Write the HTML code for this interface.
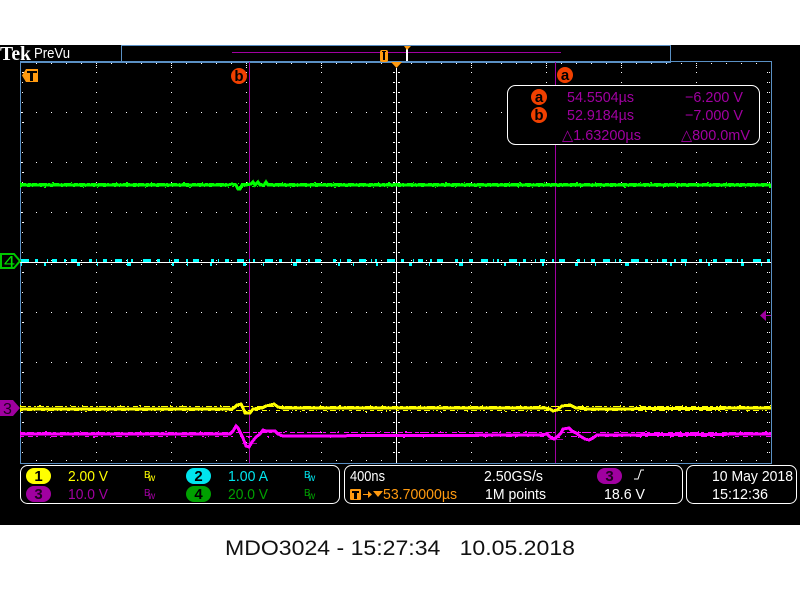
<!DOCTYPE html>
<html>
<head>
<meta charset="utf-8">
<title>MDO3024</title>
<style>
html,body{margin:0;padding:0;background:#fff;width:800px;height:600px;overflow:hidden}
svg{display:block;position:absolute;left:0;top:0}
text{font-family:"Liberation Sans","DejaVu Sans",sans-serif;font-size:15px}
.g line{stroke:#fff;stroke-width:1;shape-rendering:crispEdges}
.c{shape-rendering:crispEdges}
.n{fill:none;shape-rendering:crispEdges}
.b{font-size:10px}
</style>
</head>
<body>
<svg width="800" height="600" viewBox="0 0 800 600" xmlns="http://www.w3.org/2000/svg">
<rect x="0" y="0" width="800" height="600" fill="#fff"/>
<rect x="0" y="45" width="800" height="480" fill="#000"/>

<!-- Graticule -->
<g class="g">
  <line x1="36" y1="63.5" x2="771" y2="63.5" stroke-dasharray="1 14"/>
  <line x1="21" y1="112.5" x2="771" y2="112.5" stroke-dasharray="1 14"/>
  <line x1="21" y1="162.5" x2="771" y2="162.5" stroke-dasharray="1 14"/>
  <line x1="21" y1="212.5" x2="771" y2="212.5" stroke-dasharray="1 14"/>
  <line x1="21" y1="312.5" x2="771" y2="312.5" stroke-dasharray="1 14"/>
  <line x1="21" y1="362.5" x2="771" y2="362.5" stroke-dasharray="1 14"/>
  <line x1="21" y1="412.5" x2="771" y2="412.5" stroke-dasharray="1 14"/>
  <line x1="21" y1="260.5" x2="771" y2="260.5" stroke-dasharray="1 14"/>
  <line x1="21" y1="264.5" x2="771" y2="264.5" stroke-dasharray="1 14"/>
  <line x1="36" y1="460.5" x2="771" y2="460.5" stroke-dasharray="1 14"/>

  <line x1="96.5" y1="72" x2="96.5" y2="462" stroke-dasharray="1 9"/>
  <line x1="171.5" y1="72" x2="171.5" y2="462" stroke-dasharray="1 9"/>
  <line x1="246.5" y1="72" x2="246.5" y2="462" stroke-dasharray="1 9"/>
  <line x1="321.5" y1="72" x2="321.5" y2="462" stroke-dasharray="1 9"/>
  <line x1="471.5" y1="72" x2="471.5" y2="462" stroke-dasharray="1 9"/>
  <line x1="546.5" y1="72" x2="546.5" y2="462" stroke-dasharray="1 9"/>
  <line x1="621.5" y1="72" x2="621.5" y2="462" stroke-dasharray="1 9"/>
  <line x1="696.5" y1="72" x2="696.5" y2="462" stroke-dasharray="1 9"/>
  <line x1="96.5" y1="63" x2="96.5" y2="69" stroke-dasharray="1 1"/>
  <line x1="171.5" y1="63" x2="171.5" y2="69" stroke-dasharray="1 1"/>
  <line x1="246.5" y1="63" x2="246.5" y2="69" stroke-dasharray="1 1"/>
  <line x1="321.5" y1="63" x2="321.5" y2="69" stroke-dasharray="1 1"/>
  <line x1="471.5" y1="63" x2="471.5" y2="69" stroke-dasharray="1 1"/>
  <line x1="546.5" y1="63" x2="546.5" y2="69" stroke-dasharray="1 1"/>
  <line x1="621.5" y1="63" x2="621.5" y2="69" stroke-dasharray="1 1"/>
  <line x1="696.5" y1="63" x2="696.5" y2="69" stroke-dasharray="1 1"/>

  <line x1="22.5" y1="72" x2="22.5" y2="462" stroke-dasharray="1 9"/>
  <line x1="23.5" y1="72" x2="23.5" y2="462" stroke-dasharray="1 49"/>
  <line x1="769.5" y1="72" x2="769.5" y2="462" stroke-dasharray="1 9"/>
  <line x1="767.5" y1="72" x2="767.5" y2="462" stroke-dasharray="1 9"/>
  <line x1="393.5" y1="72" x2="393.5" y2="462" stroke-dasharray="1 9"/>
  <line x1="399.5" y1="72" x2="399.5" y2="462" stroke-dasharray="1 9"/>
  <line x1="394.5" y1="72" x2="394.5" y2="462" stroke-dasharray="1 9"/>
  <line x1="398.5" y1="72" x2="398.5" y2="462" stroke-dasharray="1 9"/>
</g>

<!-- Frame -->
<g class="c" fill="#5a90c4">
  <rect x="20" y="61" width="651" height="2"/>
  <rect x="671" y="61" width="101" height="1"/>
  <rect x="20" y="61" width="1" height="403"/>
  <rect x="771" y="61" width="1" height="403"/>
  <rect x="20" y="463" width="752" height="1"/>
  <rect x="121" y="45" width="550" height="1"/>
  <rect x="121" y="45" width="1" height="17"/>
  <rect x="670" y="45" width="1" height="17"/>
</g>

<!-- Preview -->
<rect class="c" x="232" y="52" width="329" height="1" fill="#a000a0"/>
<rect x="380" y="50" width="8" height="12" rx="2" fill="#ff9a10"/>
<rect class="c" x="383" y="52" width="2" height="8" fill="#000"/>
<rect class="c" x="382" y="51" width="4" height="1" fill="#000"/>
<rect class="c" x="406" y="47" width="2" height="14" fill="#fff"/>
<polygon points="404,46 411,46 407,50" fill="#ff9a10"/>

<!-- Logo -->
<text x="0" y="60" textLength="31" lengthAdjust="spacingAndGlyphs" fill="#fff" style="font-family:'Liberation Serif',serif;font-size:20px;font-weight:bold">Tek</text>
<text x="34" y="58" textLength="36" lengthAdjust="spacingAndGlyphs" fill="#fff">PreVu</text>

<!-- Cursors and centre line -->
<rect class="c" x="396" y="68" width="1" height="395" fill="#fff"/>
<rect class="c" x="249" y="62" width="1" height="401" fill="#a000a0"/>
<rect class="c" x="555" y="62" width="1" height="401" fill="#a000a0"/>
<polygon points="391,62 402,62 396.5,68" fill="#ff9a10"/>
<rect class="c" x="242" y="443" width="15" height="1" fill="#a000a0"/>
<rect class="c" x="548" y="439" width="15" height="1" fill="#a000a0"/>

<!-- T marker -->
<polygon points="22,75.5 26,69 38,69 38,82 26,82" fill="#ff9a10"/>
<rect class="c" x="27" y="71" width="10" height="2" fill="#000"/>
<rect class="c" x="30" y="71" width="3" height="10" fill="#000"/>

<!-- Green trace -->
<polyline class="n" stroke="#00ff00" stroke-width="3" points="20,185 228,185 232,184 236,185 238,189 240,189 242,185 246,185 251,184 253,182 255,185 258,182 260,185 264,185 266,182 268,185 771,185"/>
<line class="n" stroke="#00ff00" stroke-width="1" x1="20" y1="183.5" x2="771" y2="183.5" stroke-dasharray="6 2 3 1 5 2 8 1 2 3 6 2 1 2 7 3 4 1"/>
<line class="n" stroke="#00ff00" stroke-width="1" x1="20" y1="186.5" x2="771" y2="186.5" stroke-dasharray="2 5 3 2 1 7 2 3 1 4 3 8 2 3 1 6"/>
<line class="n" stroke="#00ff00" stroke-width="1" x1="20" y1="182.5" x2="771" y2="182.5" stroke-dasharray="1 31 2 17 1 44 1 9 2 23"/>
<line class="n" stroke="#00ff00" stroke-width="1" x1="20" y1="187.5" x2="771" y2="187.5" stroke-dasharray="1 23 2 37 1 13 1 47 1 19"/>

<!-- Cyan trace -->
<line class="n" stroke="#00ffff" stroke-width="3" x1="21" y1="260.5" x2="771" y2="260.5" stroke-dasharray="8 6 3 9 1 4 5 7 2 5 6 12 3 4 1 6 4 8 7 5 1 3 2 10"/>
<line class="n" stroke="#00ffff" stroke-width="3" x1="21" y1="264.5" x2="771" y2="264.5" stroke-dasharray="1 22 2 31 3 17 1 29 4 41 2 13"/>
<rect class="c" x="20" y="262" width="751" height="1" fill="#fff"/>

<!-- Yellow trace -->
<polyline class="n" stroke="#ffff00" stroke-width="3" points="20,409 232,409 235,407 237,405 241,404 243,408 245,413 250,413 253,409 262,408 266,406 270,405 274,404 278,407 283,408 545,408 550,409 553,411 557,410 562,406 570,405 576,408 590,409 771,408"/>
<line class="n" stroke="#ffff00" stroke-width="1" x1="20" y1="406.5" x2="771" y2="406.5" stroke-dasharray="6 2 3 3 2 1 7 2 3 3 1 2 8 2 2 4 5 2 1 3"/>
<line class="n" stroke="#ffff00" stroke-width="1" x1="20" y1="410.5" x2="771" y2="410.5" stroke-dasharray="3 4 5 2 1 6 4 3 6 3 1 2 2 5"/>
<line class="n" stroke="#ffff00" stroke-width="1" x1="20" y1="405.5" x2="771" y2="405.5" stroke-dasharray="1 18 2 29 1 11 1 37"/>
<line class="n" stroke="#ffff00" stroke-width="1" x1="20" y1="411.5" x2="771" y2="411.5" stroke-dasharray="1 26 1 37 2 19 1 53"/>

<!-- Magenta trace -->
<polyline class="n" stroke="#ff00ff" stroke-width="3" points="20,434 225,434 230,434 233,431 236,426 238,428 240,432 243,438 246,446 249,447 252,442 256,437 260,434 263,430 266,431 275,431 278,434 283,436 540,435 547,434 550,437 554,439 558,436 561,433 563,429 569,428 572,431 576,433 580,436 585,439 589,440 593,438 597,435 771,434"/>
<line class="n" stroke="#ff00ff" stroke-width="1" x1="20" y1="432.5" x2="771" y2="432.5" stroke-dasharray="5 2 7 3 4 1 9 2 3 4 6 1 2 5"/>
<line class="n" stroke="#ff00ff" stroke-width="1" x1="20" y1="436.5" x2="771" y2="436.5" stroke-dasharray="4 4 5 3 2 7 1 5 6 3 3 9 2 4 1 6"/>
<line class="n" stroke="#ff00ff" stroke-width="1" x1="20" y1="431.5" x2="771" y2="431.5" stroke-dasharray="1 24 2 33 1 17 1 41"/>
<line class="n" stroke="#ff00ff" stroke-width="1" x1="20" y1="437.5" x2="771" y2="437.5" stroke-dasharray="1 29 1 42 2 18 1 61"/>

<!-- Channel markers -->
<polygon points="1,254 14,254 20,261 14,268 1,268" fill="#000" stroke="#00c800" stroke-width="2"/>
<text x="4" y="267" textLength="11" lengthAdjust="spacingAndGlyphs" fill="#00e000" style="font-size:16px">4</text>
<polygon points="0,400 13,400 20,408 13,416 0,416" fill="#a000a0"/>
<text x="3" y="414" fill="#200020" style="font-size:16px">3</text>
<polygon points="760,315.5 766,310 766,321" fill="#a000a0"/>
<rect class="c" x="766" y="315" width="5" height="1" fill="#a000a0"/>

<!-- Cursor labels -->
<circle cx="239" cy="76" r="8" fill="#f04000"/>
<text x="239" y="81" text-anchor="middle" fill="#000" style="font-weight:bold">b</text>
<circle cx="565" cy="75" r="8" fill="#f04000"/>
<text x="565" y="80" text-anchor="middle" fill="#000" style="font-weight:bold">a</text>

<!-- Readout -->
<rect x="507.5" y="85.5" width="252" height="59" rx="8" fill="#000" stroke="#fff" stroke-width="1"/>
<circle cx="539" cy="97" r="8" fill="#f04000"/>
<text x="539" y="102" text-anchor="middle" fill="#000" style="font-weight:bold">a</text>
<circle cx="539" cy="115" r="8" fill="#f04000"/>
<text x="539" y="120" text-anchor="middle" fill="#000" style="font-weight:bold">b</text>
<g fill="#a000a0">
  <text x="567" y="102" textLength="67" lengthAdjust="spacingAndGlyphs">54.5504µs</text>
  <text x="567" y="120" textLength="67" lengthAdjust="spacingAndGlyphs">52.9184µs</text>
  <text x="562" y="140" textLength="79" lengthAdjust="spacingAndGlyphs">△1.63200µs</text>
  <text x="685" y="102" textLength="58" lengthAdjust="spacingAndGlyphs">−6.200 V</text>
  <text x="685" y="120" textLength="58" lengthAdjust="spacingAndGlyphs">−7.000 V</text>
  <text x="681" y="140" textLength="69" lengthAdjust="spacingAndGlyphs">△800.0mV</text>
</g>

<!-- Bottom boxes -->
<g fill="none" stroke="#fff" stroke-width="1">
  <rect x="20.5" y="465.5" width="319" height="38" rx="7"/>
  <rect x="344.5" y="465.5" width="338" height="38" rx="7"/>
  <rect x="686.5" y="465.5" width="110" height="38" rx="7"/>
</g>
<rect x="26" y="468" width="25" height="16" rx="8" fill="#ffff00"/>
<rect x="26" y="486" width="25" height="16" rx="8" fill="#a000a0"/>
<rect x="186" y="468" width="25" height="16" rx="8" fill="#00e5ee"/>
<rect x="186" y="486" width="25" height="16" rx="8" fill="#00a000"/>
<g text-anchor="middle" style="font-weight:bold">
  <text x="38.5" y="481" fill="#000">1</text>
  <text x="38.5" y="499" fill="#200020">3</text>
  <text x="198.5" y="481" fill="#000">2</text>
  <text x="198.5" y="499" fill="#000">4</text>
</g>
<text x="68" y="481" textLength="40" lengthAdjust="spacingAndGlyphs" fill="#ffff00">2.00 V</text>
<text x="68" y="499" textLength="40" lengthAdjust="spacingAndGlyphs" fill="#a000a0">10.0 V</text>
<text x="228" y="481" textLength="40" lengthAdjust="spacingAndGlyphs" fill="#00e5ee">1.00 A</text>
<text x="228" y="499" textLength="40" lengthAdjust="spacingAndGlyphs" fill="#00a000">20.0 V</text>
<text class="b" x="144" y="478" fill="#ffff00">B</text><text class="b" x="148" y="481" fill="#ffff00">w</text>
<text class="b" x="144" y="496" fill="#a000a0">B</text><text class="b" x="148" y="499" fill="#a000a0">w</text>
<text class="b" x="304" y="478" fill="#00e5ee">B</text><text class="b" x="308" y="481" fill="#00e5ee">w</text>
<text class="b" x="304" y="496" fill="#00a000">B</text><text class="b" x="308" y="499" fill="#00a000">w</text>

<g fill="#fff">
  <text x="350" y="481" textLength="35" lengthAdjust="spacingAndGlyphs">400ns</text>
  <text x="484" y="481" textLength="59" lengthAdjust="spacingAndGlyphs">2.50GS/s</text>
  <text x="485" y="499" textLength="61" lengthAdjust="spacingAndGlyphs">1M points</text>
  <text x="604" y="499" textLength="41" lengthAdjust="spacingAndGlyphs">18.6 V</text>
  <text x="712" y="481" textLength="81" lengthAdjust="spacingAndGlyphs">10 May  2018</text>
  <text x="712" y="499" textLength="56" lengthAdjust="spacingAndGlyphs">15:12:36</text>
</g>
<rect x="597" y="468" width="25" height="16" rx="8" fill="#a000a0"/>
<text x="609.5" y="481" text-anchor="middle" fill="#200020" style="font-weight:bold">3</text>
<polyline fill="none" stroke="#fff" stroke-width="1" points="634,479 638,479 641,470 644,470"/>

<rect x="350" y="489" width="11" height="11" rx="1" fill="#ff9a10"/>
<rect class="c" x="352" y="491" width="7" height="2" fill="#000"/>
<rect class="c" x="354" y="491" width="3" height="8" fill="#000"/>
<rect class="c" x="363" y="494" width="7" height="1" fill="#ff9a10"/>
<polygon points="368,491 372,494.5 368,498" fill="#ff9a10"/>
<polygon points="373,491 383,491 378,497" fill="#ff9a10"/>
<text x="383" y="499" textLength="74" lengthAdjust="spacingAndGlyphs" fill="#ff9a10">53.70000µs</text>

<!-- Footer caption -->
<text x="225" y="555" textLength="350" lengthAdjust="spacingAndGlyphs" fill="#111" style="font-size:21px" xml:space="preserve">MDO3024 - 15:27:34   10.05.2018</text>
</svg>
</body>
</html>
